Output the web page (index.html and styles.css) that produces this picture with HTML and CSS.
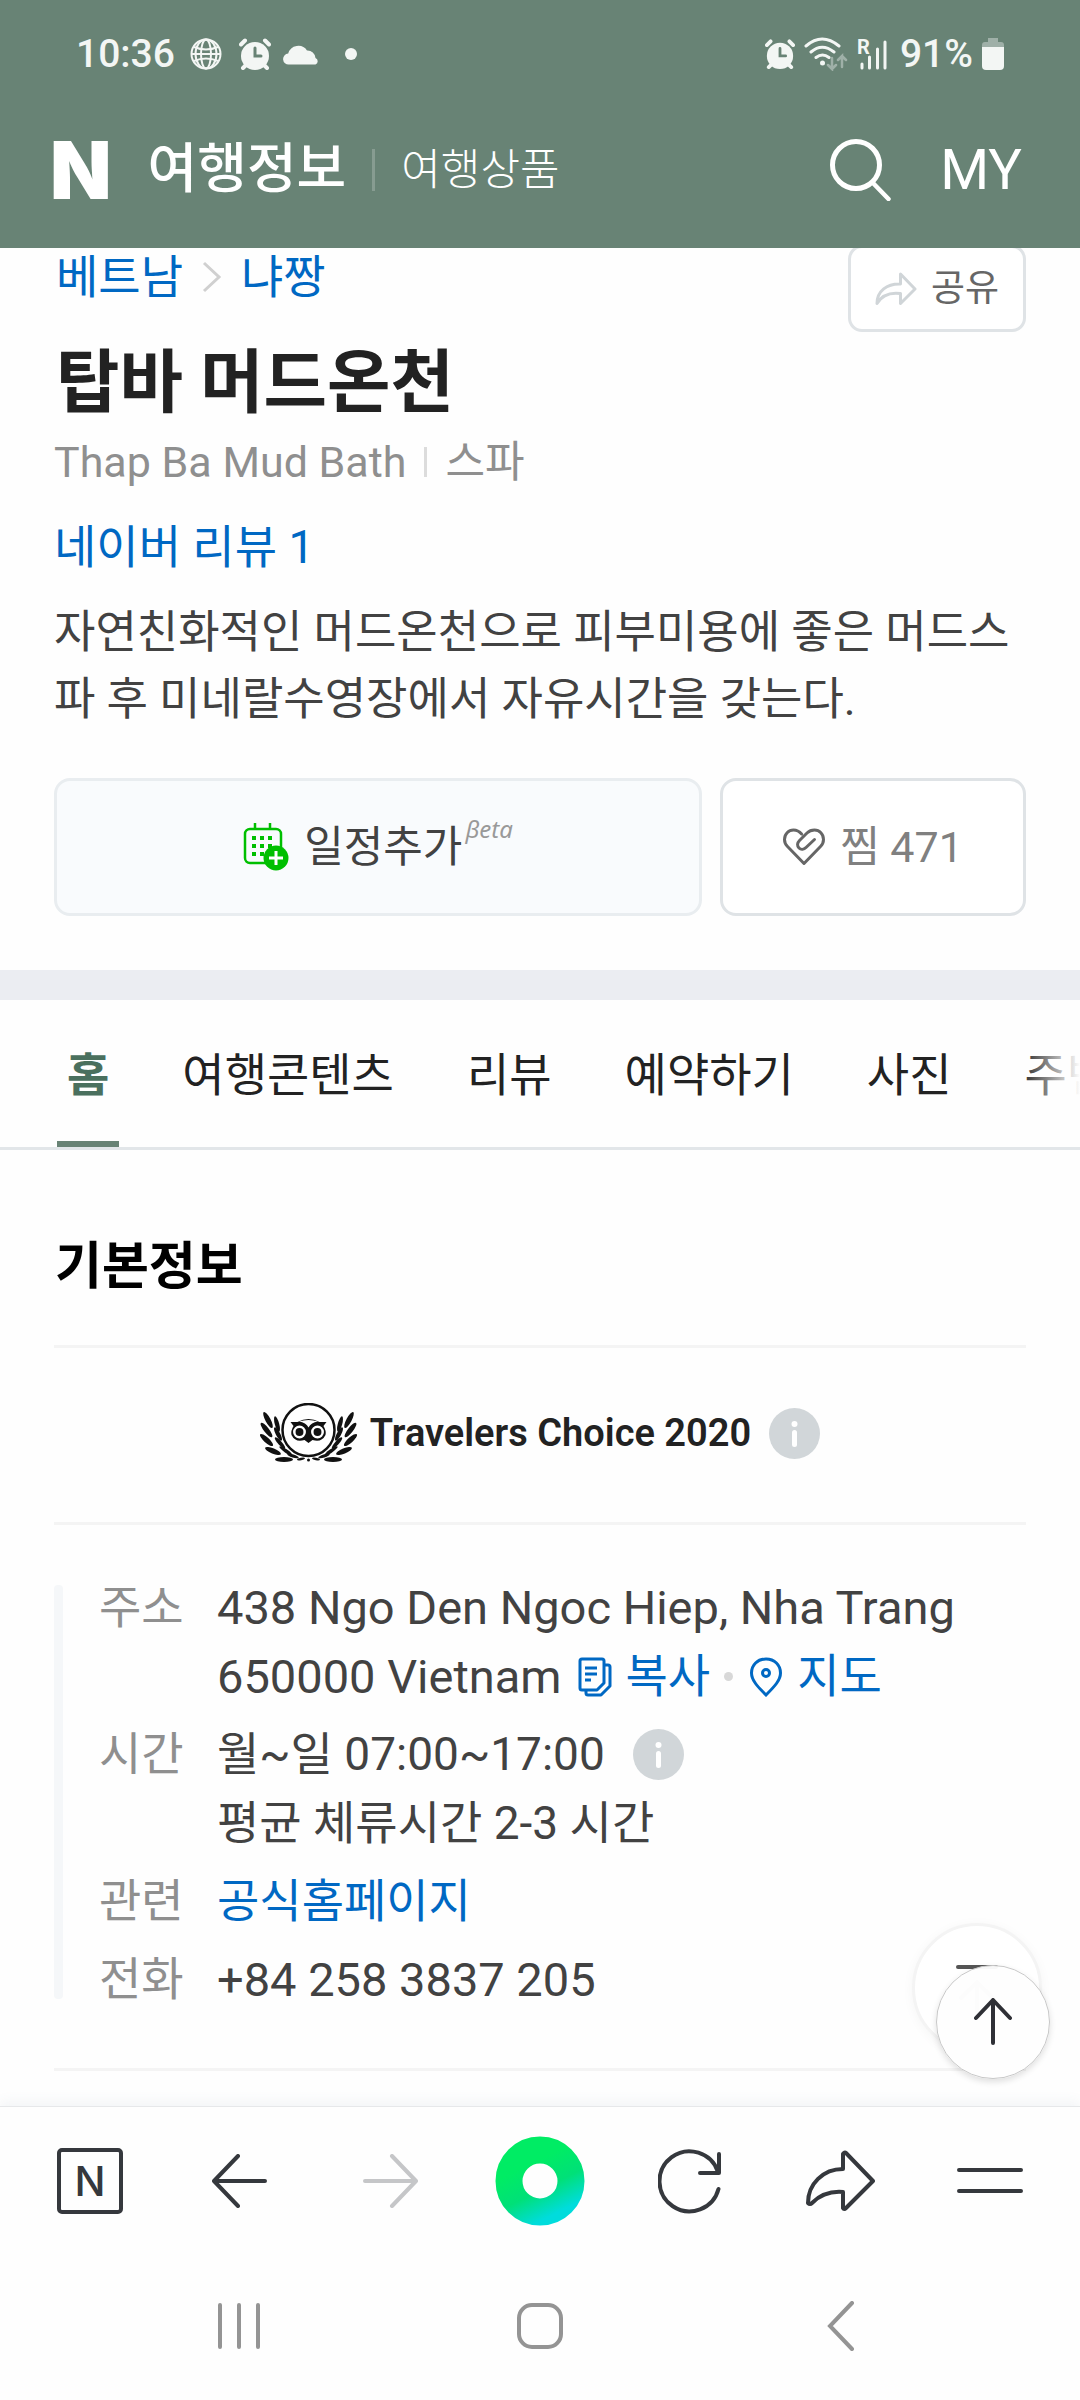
FILE: index.html
```
<!DOCTYPE html>
<html lang="ko">
<head>
  <meta charset="UTF-8">
  <meta name="viewport" content="width=device-width, initial-scale=1.0">
  <title>탑바 머드온천 : 여행정보</title>
  <link rel="stylesheet" href="styles.css">
</head>
<body>
  <header class="header">
    <div class="status">
      <span class="status-text">10:36</span>
      <svg class="status-globe" width="32" height="32" viewBox="0 0 32 32" fill="none" stroke="currentColor" stroke-width="2">
        <circle cx="16" cy="16" r="14.5"/>
        <ellipse cx="16" cy="16" rx="5" ry="14.5"/>
        <ellipse cx="16" cy="16" rx="10.5" ry="14.5"/>
        <path d="M1.5 16h29M4 9q12 5 24 0M4 23q12-5 24 0"/>
      </svg>
      <svg class="status-alarm" width="32" height="32" viewBox="0 0 32 32">
        <circle cx="16" cy="18" r="14" fill="currentColor"/>
        <path d="M2 6.500l4-4M30 6.500l-4-4M4 30l3-3M28 30l-3-3" stroke="currentColor" stroke-width="4" stroke-linecap="round"/>
        <path d="M16 10v8h6" fill="none" stroke="#688375" stroke-width="3" stroke-linecap="round"/>
      </svg>
      <svg class="status-cloud" width="36" height="22" viewBox="0 0 36 22" fill="currentColor">
        <path d="M6 21.500a5.500 5.500 0 0 1-.8-11A10.500 10.500 0 0 1 24 7.500a8 8 0 0 1 8.500 7.500 3.500 3.500 0 0 1 0 6.500z"/>
      </svg>
      <svg class="status-dot" width="12" height="12" viewBox="0 0 12 12"><circle cx="6" cy="6" r="6" fill="currentColor"/></svg>

      <div class="status-right">
        <svg width="30" height="30" viewBox="0 0 32 32">
          <circle cx="16" cy="18" r="14" fill="currentColor"/>
          <path d="M2 6.500l4-4M30 6.500l-4-4M4 30l3-3M28 30l-3-3" stroke="currentColor" stroke-width="4" stroke-linecap="round"/>
          <path d="M16 10v8h6" fill="none" stroke="#688375" stroke-width="3" stroke-linecap="round"/>
        </svg>
        <svg width="44" height="34" viewBox="0 0 44 34" fill="none" stroke="currentColor" stroke-width="3" stroke-linecap="round">
          <path d="M2 9Q18-5 35 9M7 15q11-9.500 23 0M12 20.500q6.500-5 13 0"/>
          <circle cx="18.500" cy="26" r="2.500" fill="currentColor" stroke="none"/>
          <path d="M28 21v11l-4-4M28 32l4-4M38 30V19l-4 4M38 19l4 4" stroke-width="2.500" opacity=".4"/>
        </svg>
        <div class="signal">
          <span class="roaming">R</span>
          <svg width="30" height="31" viewBox="0 0 30 31" stroke="currentColor" stroke-width="3" stroke-linecap="round">
            <path d="M5 25v4M12.500 18v11M20.500 10v19M28 3v26"/>
          </svg>
        </div>
        <span class="status-text battery-text">91%</span>
        <svg width="22" height="32" viewBox="0 0 22 32" fill="currentColor">
          <path d="M6 0h10v4h3q3 0 3 3v3H0V7q0-3 3-3h3z" opacity=".4"/>
          <path d="M0 9h22v19q0 4-4 4H4q-4 0-4-4z"/>
        </svg>
      </div>
    </div>

    <nav class="service">
      <a class="logo" href="#">N</a>
      <a class="service-main" href="#">여행정보</a>
      <span class="service-line"></span>
      <a class="service-sub" href="#">여행상품</a>
      <button class="search" type="button" aria-label="검색">
        <svg width="62" height="62" viewBox="0 0 62 62" fill="none" stroke="currentColor" stroke-linecap="round">
          <circle cx="26" cy="26" r="23.500" stroke-width="5"/>
          <path d="M43 44l15.500 16" stroke-width="4.500"/>
        </svg>
      </button>
      <a class="my" href="#">MY</a>
    </nav>
  </header>

  <main class="main">
    <section class="place">
      <div class="place-top">
        <div class="breadcrumb">
          <a href="#">베트남</a>
          <svg width="20" height="32" viewBox="0 0 20 32" fill="none" stroke="#d0d0d0" stroke-width="3"><path d="M2 2l15 14L2 30"/></svg>
          <a href="#">냐짱</a>
        </div>
        <button class="share" type="button">
          <svg width="42" height="34" viewBox="0 0 42 34" fill="none" stroke="#d0d5d8" stroke-width="3" stroke-linejoin="round">
            <path d="M25.500 2L40 17 25.500 31.500V21.500C14 20 7 23 2 31.500 2 19 12 11.500 25.500 12z"/>
          </svg>
          공유
        </button>
      </div>
      <h1 class="place-name">탑바 머드온천</h1>
      <p class="place-sub">Thap Ba Mud Bath<span class="place-line"></span>스파</p>
      <a class="review" href="#">네이버 리뷰 1</a>
      <p class="desc">자연친화적인 머드온천으로 피부미용에 좋은 머드스파 후 미네랄수영장에서 자유시간을 갖는다.</p>
      <div class="actions">
        <button class="btn btn-plan" type="button">
          <svg width="46" height="48" viewBox="0 0 46 48" fill="none" stroke="#00bf00" stroke-width="2.500">
            <rect x="2" y="6" width="36" height="34" rx="5"/>
            <path d="M12 0v6M27 0v6"/>
            <path d="M9 15h4M17 15h4M25 15h4M9 23h4M17 23h4M25 23h4M9 31h4M17 31h4" stroke-width="4"/>
            <circle cx="33" cy="35" r="12.500" fill="#00bf00" stroke="none"/>
            <path d="M33 28v14M26 35h14" stroke="#fff" stroke-width="3"/>
          </svg>
          <span>일정추가</span><em class="beta">βeta</em>
        </button>
        <button class="btn btn-keep" type="button">
          <svg width="42" height="38" viewBox="0 0 42 38" fill="none" stroke="#666" stroke-width="3" stroke-linecap="round" stroke-linejoin="round">
            <path d="M18.600 6C16 3 13 2 10.500 2 5.500 2 1.500 6 1.500 11.500c0 2.500 1 5 3 7L21 35.500l16.500-17c2-2 3-4.500 3-7C40.500 6 36.500 2 31.500 2 28.500 2 26 3 24 5l-7.500 7.500c-2.500 2.500-2.500 5.500-.5 7.500s5 1.500 7-.5l8.500-8"/>
          </svg>
          <span>찜 471</span>
        </button>
      </div>
    </section>

    <nav class="tabs">
      <a class="tab active" href="#">홈</a>
      <a class="tab" href="#">여행콘텐츠</a>
      <a class="tab" href="#">리뷰</a>
      <a class="tab" href="#">예약하기</a>
      <a class="tab" href="#">사진</a>
      <a class="tab" href="#">주변</a>
    </nav>

    <section class="info">
      <h2 class="info-title">기본정보</h2>
      <div class="award">
        <svg class="award-logo" width="98" height="60" viewBox="0 0 98 60">
          <defs>
            <g id="laurel">
              <ellipse cx="8" cy="17" rx="9" ry="2.600" transform="rotate(62 8 17)"/>
              <ellipse cx="17" cy="21" rx="8" ry="2.200" transform="rotate(75 17 21)"/>
              <ellipse cx="6.500" cy="27" rx="9" ry="2.600" transform="rotate(52 6.500 27)"/>
              <ellipse cx="18" cy="31" rx="7.500" ry="2.200" transform="rotate(62 18 31)"/>
              <ellipse cx="6.500" cy="37" rx="8.500" ry="2.600" transform="rotate(42 6.500 37)"/>
              <ellipse cx="20" cy="40" rx="7.500" ry="2" transform="rotate(48 20 40)"/>
              <ellipse cx="13" cy="48" rx="8.500" ry="2.600" transform="rotate(22 13 48)"/>
              <ellipse cx="26" cy="48" rx="8" ry="1.800" transform="rotate(35 26 48)"/>
              <ellipse cx="24" cy="56.500" rx="9" ry="2.500"/>
              <ellipse cx="33" cy="53" rx="6" ry="1.500" transform="rotate(18 33 53)"/>
              <ellipse cx="41" cy="56" rx="4" ry="1.200" transform="rotate(-10 41 56)"/>
            </g>
          </defs>
          <g fill="#111">
            <use href="#laurel"/>
            <use href="#laurel" transform="translate(97 0) scale(-1 1)"/>
            <circle cx="48.500" cy="27" r="26" fill="#fff" stroke="#111" stroke-width="2.500"/>
            <path d="M30.500 19h7q11-6 22 0h7l-3 4q3 5 2 9-4 8-13 5l-4 3-4-3q-9 3-13-5-1-4 2-9z"/>
            <path d="M39 18.500q9.500-3 19 0-7 1-9.500 6-2.500-5-9.500-6z" fill="#fff"/>
            <g stroke="#fff" stroke-width="2.500"><circle cx="39.500" cy="29" r="5.200"/><circle cx="57.500" cy="29" r="5.200"/></g>
            <circle cx="48.500" cy="57" r="1.500"/>
          </g>
        </svg>
        <strong>Travelers Choice 2020</strong>
        <button class="tip" type="button" aria-label="도움말">
          <svg width="51" height="51" viewBox="0 0 51 51"><circle cx="25.500" cy="25.500" r="25.500" fill="#d1d6d9"/><circle cx="25.500" cy="16" r="3" fill="#fff"/><path d="M25.500 24.500v12" stroke="#fff" stroke-width="5" stroke-linecap="round"/></svg>
        </button>
      </div>

      <div class="detail">
        <dl class="detail-list">
          <div class="row">
            <dt>주소</dt>
            <dd>
              <span class="latin">438 Ngo Den Ngoc Hiep, Nha Trang</span>
              <span class="line">
                <span class="latin">650000 Vietnam</span>
                <a class="tool" href="#">
                  <svg width="34" height="40" viewBox="0 0 34 40" fill="none" stroke="currentColor" stroke-width="3" stroke-linejoin="round">
                    <path d="M4 2h20q2 0 2 2v22l-7 7H4q-2 0-2-2V4q0-2 2-2z"/>
                    <path d="M26 8h4q2 0 2 2v19l-9 9H10q-2 0-2-2v-3M7 11h12M7 17h12M7 23h6"/>
                  </svg>
                  복사
                </a>
                <span class="dot"></span>
                <a class="tool" href="#">
                  <svg width="34" height="40" viewBox="0 0 34 40" fill="none" stroke="currentColor" stroke-width="3">
                    <path d="M17 2C8.500 2 2.500 8 2.500 16 2.500 23 8 29 17 38c9-9 14.500-15 14.500-22C31.500 8 25.500 2 17 2z"/>
                    <circle cx="17" cy="16" r="3.500"/>
                  </svg>
                  지도
                </a>
              </span>
            </dd>
          </div>
          <div class="row">
            <dt>시간</dt>
            <dd>
              <span class="line">월~일 07:00~17:00
                <button class="tip" type="button" aria-label="영업시간 안내">
                  <svg width="51" height="51" viewBox="0 0 51 51"><circle cx="25.500" cy="25.500" r="25.500" fill="#d1d6d9"/><circle cx="25.500" cy="16" r="3" fill="#fff"/><path d="M25.500 24.500v12" stroke="#fff" stroke-width="5" stroke-linecap="round"/></svg>
                </button>
              </span>
              <span>평균 체류시간 2-3 시간</span>
            </dd>
          </div>
          <div class="row">
            <dt>관련</dt>
            <dd><a href="#">공식홈페이지</a></dd>
          </div>
          <div class="row">
            <dt>전화</dt>
            <dd><span class="latin">+84 258 3837 205</span></dd>
          </div>
        </dl>
      </div>
    </section>

    <!-- floating scroll buttons -->
    <div class="floating">
      <button class="page-top" type="button" aria-label="맨 위로">
        <svg width="44" height="54" viewBox="0 0 44 54" fill="none" stroke="#555" stroke-width="4" stroke-linecap="round"><path d="M3 3h38"/><path d="M22 52V18M6 34l16-16 16 16" opacity=".4"/></svg>
      </button>
      <button class="app-top" type="button" aria-label="위로">
        <svg width="40" height="48" viewBox="0 0 40 48" fill="none" stroke="#2f3036" stroke-width="4" stroke-linecap="round" stroke-linejoin="round"><path d="M20 45V3M3 20L20 2l17 18"/></svg>
      </button>
    </div>
  </main>

  <footer class="footer">
    <div class="toolbar">
      <button type="button"><span class="home-n">N</span></button>
      <button type="button" aria-label="뒤로"><svg width="56" height="54" viewBox="0 0 56 54"><path d="M53 27H3M26 2L2 27l24 25"/></svg></button>
      <button class="disabled" type="button" aria-label="앞으로"><svg width="56" height="54" viewBox="0 0 56 54"><path d="M3 27h50M30 2l24 25-24 25"/></svg></button>
      <button type="button" aria-label="그린닷">
        <svg width="90" height="90" viewBox="0 0 90 90">
          <defs><linearGradient id="green" x1="0.3" y1="0" x2="0.8" y2="1"><stop offset=".2" stop-color="#00ec64"/><stop offset=".6" stop-color="#00e078"/><stop offset="1" stop-color="#00dcdc"/></linearGradient></defs>
          <circle cx="45" cy="45" r="31" fill="none" stroke="url(#green)" stroke-width="27"/>
        </svg>
      </button>
      <button type="button" aria-label="새로고침"><svg width="64" height="66" viewBox="0 0 64 66"><path d="M60.500 41A30 30 0 1 1 60 24M61 6v19H42"/></svg></button>
      <button type="button" aria-label="공유"><svg width="70" height="62" viewBox="0 0 70 62"><path d="M39 3q1-1 2 0l27 28-27 27q-2 2-3 0V42C26 41 16 44 7 53q-2 2-4 0C3 34 18 19 38 19V4z"/></svg></button>
      <button type="button" aria-label="메뉴"><svg width="66" height="26" viewBox="0 0 66 26"><path d="M2 2h62M2 23h62"/></svg></button>
    </div>
    <div class="system">
      <button type="button" aria-label="최근 앱"><svg width="44" height="48" viewBox="0 0 44 48"><path d="M3 3v42M22 3v42M41 3v42"/></svg></button>
      <button type="button" aria-label="홈"><svg width="48" height="48" viewBox="0 0 48 48"><rect x="3" y="3" width="42" height="42" rx="13"/></svg></button>
      <button type="button" aria-label="이전"><svg width="28" height="50" viewBox="0 0 28 50"><path d="M25 2L3 25l22 23"/></svg></button>
    </div>
  </footer>
</body>
</html>
```
FILE: styles.css
```
* {
  box-sizing: border-box;
}
body {
  margin: 0;
  min-height: 100vh;
  display: flex;
  flex-direction: column;
  background: #fefefe;
  color: #424242;
  font-family: Roboto, "Noto Sans CJK KR", sans-serif;
  font-size: 46px;
  line-height: 60px;
}
h1, h2, p, dl, dd {
  margin: 0;
}
a {
  color: #0068c3;
  text-decoration: none;
}
button {
  padding: 0;
  border: none;
  background: none;
  color: inherit;
  font: inherit;
  cursor: pointer;
}
svg {
  display: block;
  flex: none;
}

/* header */
.header {
  position: relative;
  z-index: 2;
  background: #688375;
  color: #fff;
}
.status {
  display: flex;
  align-items: center;
  height: 108px;
  padding: 0 76px;
  color: #f3f6f4;
}
.status-text {
  font-size: 39px;
  font-weight: 500;
}
.status-globe {
  margin-left: 15px;
}
.status-alarm {
  margin-left: 17px;
}
.status-cloud {
  margin-left: 12px;
}
.status-dot {
  margin-left: 26px;
}
.status-right {
  display: flex;
  align-items: center;
  gap: 9px;
  margin-left: auto;
}
.status-right .battery-text {
  margin-left: 4px;
}
.signal {
  position: relative;
}
.roaming {
  position: absolute;
  top: -2px;
  left: 0;
  font-size: 20px;
  font-weight: 700;
  line-height: 20px;
}
.service {
  display: flex;
  align-items: center;
  height: 140px;
  padding: 0 58px 16px 50px;
}
.service a {
  color: #fff;
}
.service .logo {
  font-family: Inter, sans-serif;
  font-size: 80px;
  font-weight: 900;
}
.service-main {
  margin-left: 36px;
  font-size: 54px;
  font-weight: 500;
}
.service-line {
  width: 3px;
  height: 42px;
  margin: 0 26px;
  background: #879c91;
}
.service-sub {
  font-size: 43px;
  font-weight: 300;
}
.search {
  margin-left: auto;
}
.service .my {
  margin-left: 48px;
  font-size: 56px;
}

/* place summary */
.main {
  position: relative;
  flex: 1;
  margin-top: -3px;
}
.place {
  padding: 0 54px 54px;
  border-bottom: 30px solid #ebedf2;
}
.place-top {
  display: flex;
  justify-content: space-between;
  align-items: flex-start;
}
.breadcrumb {
  display: flex;
  align-items: center;
  gap: 19px;
  height: 64px;
  padding-left: 2px;
}
.share {
  display: flex;
  align-items: center;
  gap: 14px;
  height: 87px;
  padding: 0 24px;
  border: 3px solid #dfe3e6;
  border-radius: 14px;
  background: #fff;
  color: #666;
  font-size: 37px;
}
.place-name {
  margin-top: 10px;
  padding-left: 2px;
  color: #222;
  font-size: 69px;
  font-weight: 700;
  line-height: 84px;
}
.place-sub {
  display: flex;
  align-items: center;
  margin-top: 6px;
  color: #8f8f8f;
  font-size: 43px;
}
.place-line {
  width: 3px;
  height: 30px;
  margin: 0 18px;
  background: #dcdcdc;
}
.review {
  display: block;
  margin-top: 25px;
}
.desc {
  margin-top: 22px;
  font-size: 45px;
  line-height: 67px;
  word-break: break-all;
}
.actions {
  display: grid;
  grid-template-columns: 36fr 17fr;
  gap: 18px;
  margin-top: 45px;
}
.btn {
  display: flex;
  align-items: center;
  justify-content: center;
  gap: 15px;
  height: 138px;
  border: 3px solid #dfe3e6;
  border-radius: 16px;
  font-size: 43px;
}
.btn-plan {
  border-color: #e9edf0;
  background: #f9fbfd;
}
.btn-keep {
  background: #fff;
  color: #808080;
}
.beta {
  align-self: flex-start;
  margin: 18px 0 0 -12px;
  color: #999;
  font-family: "Noto Sans", sans-serif;
  font-size: 24px;
}

/* tabs */
.tabs {
  position: relative;
  display: flex;
  gap: 53px;
  height: 150px;
  padding-left: 57px;
  border-bottom: 3px solid #e2e6e9;
  overflow: hidden;
  white-space: nowrap;
}
.tabs::after {
  content: "";
  position: absolute;
  top: 0;
  right: 0;
  width: 60px;
  height: 100%;
  background: linear-gradient(to right, rgba(254, 254, 254, 0), #fefefe);
}
.tab {
  flex: none;
  padding: 3px 10px 0;
  color: #222;
  line-height: 144px;
}
.tab.active {
  border-bottom: 6px solid #688375;
  color: #4a705e;
  font-weight: 700;
}

/* basic information */
.info {
  padding: 82px 54px 0;
}
.info-title {
  padding-left: 1px;
  color: #000;
  font-size: 51px;
  font-weight: 700;
  line-height: 70px;
}
.award {
  display: flex;
  align-items: center;
  justify-content: center;
  height: 180px;
  margin-top: 43px;
  padding-bottom: 4px;
  border-top: 3px solid #f4f4f4;
  border-bottom: 3px solid #f4f4f4;
  color: #222;
}
.award strong {
  margin: 0 18px 0 12px;
  font-size: 38px;
  font-weight: 600;
}
.detail {
  display: flex;
  padding: 48px 0 54px;
  border-bottom: 3px solid #f4f4f4;
}
.detail::before {
  content: "";
  width: 9px;
  margin: 12px 36px 15px 0;
  border-radius: 4px;
  background: #f5f7f9;
}
.detail-list {
  display: flex;
  flex: 1;
  flex-direction: column;
  gap: 9px;
  line-height: 69px;
}
.row {
  display: flex;
}
.row dt {
  width: 118px;
  color: #8f8f8f;
}
.row dd {
  display: flex;
  flex: 1;
  flex-direction: column;
}
.latin {
  font-size: 47px;
}
.line {
  display: flex;
  align-items: center;
  height: 69px;
}
.line .tip {
  margin-left: 28px;
}
.tool {
  display: flex;
  align-items: center;
  gap: 14px;
  margin-left: 16px;
}
.dot {
  width: 9px;
  height: 9px;
  margin-left: 14px;
  border-radius: 50%;
  background: #d8d8d8;
}

/* floating buttons sit over the end of the page */
.floating button {
  position: absolute;
  display: flex;
  justify-content: center;
  border-radius: 50%;
}
.floating .page-top {
  right: 38px;
  bottom: 53px;
  width: 130px;
  height: 130px;
  padding-top: 38px;
  border: 3px solid #f4f4f4;
  background: #fff;
  box-shadow: 0 2px 12px rgba(0, 0, 0, 0.04);
}
.floating .app-top {
  right: 30px;
  bottom: 27px;
  align-items: center;
  width: 114px;
  height: 114px;
  border: 1px solid #c8c8c8;
  background: rgba(254, 254, 254, 0.96);
  box-shadow: 0 3px 6px rgba(0, 0, 0, 0.12);
}

/* browser toolbar and system navigation */
.footer {
  position: relative;
  padding-bottom: 3px;
  border-top: 1px solid #e6e8ea;
  background: #fefefe;
  box-shadow: 0 -4px 12px rgba(80, 110, 140, 0.07);
}
.toolbar {
  display: grid;
  grid-template-columns: repeat(7, 1fr);
  height: 148px;
  padding: 0 15px;
}
.toolbar button, .system button {
  display: flex;
  align-items: center;
  justify-content: center;
}
.toolbar svg {
  fill: none;
  stroke: #35383d;
  stroke-width: 4;
  stroke-linecap: round;
  stroke-linejoin: round;
}
.toolbar .disabled svg {
  stroke: #c5c6c8;
}
.home-n {
  width: 66px;
  height: 66px;
  border: 4px solid #35383d;
  border-radius: 5px;
  color: #35383d;
  font-family: Inter, sans-serif;
  font-size: 41px;
  font-weight: 500;
  line-height: 58px;
}
.system {
  display: grid;
  grid-template-columns: repeat(3, 1fr);
  height: 142px;
  padding: 0 88px;
}
.system svg {
  fill: none;
  stroke: #949494;
  stroke-width: 4;
  stroke-linecap: round;
}
```
